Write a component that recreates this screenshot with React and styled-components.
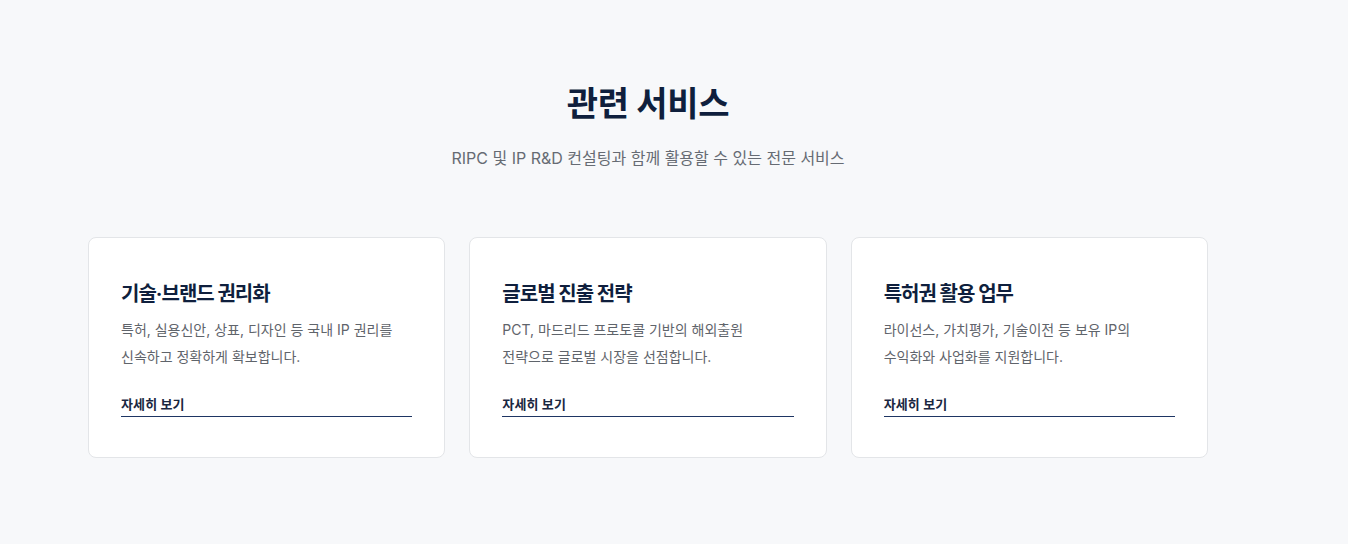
import React from "react";
import styled, { createGlobalStyle } from "styled-components";

const GlobalStyle = createGlobalStyle`
  html, body { margin: 0; padding: 0; background: #f7f8fa; }
  body { font-family: Inter, "Noto Sans CJK KR", sans-serif; -webkit-font-smoothing: antialiased; }
  * { box-sizing: border-box; }
`;

const Section = styled.section`
  background: #f7f8fa;
  min-height: 544px;
  padding: 80px 140px 80px 88px;
`;

const Header = styled.header`
  text-align: center;
  margin-bottom: 66px;
`;

const Title = styled.h2`
  margin: 0 0 18px;
  font-size: 34px;
  font-weight: 700;
  line-height: 1.4;
  letter-spacing: -0.01em;
  color: #0f1f3d;
`;

const Subtitle = styled.p`
  margin: 0;
  font-size: 16px;
  line-height: 1.6;
  color: #666b73;
`;

const Grid = styled.div`
  display: grid;
  grid-template-columns: repeat(3, 1fr);
  gap: 24px;
`;

const Card = styled.article`
  background: #ffffff;
  border: 1px solid #e3e5e8;
  border-radius: 8px;
  padding: 42px 32px 40px;
  display: flex;
  flex-direction: column;
`;

const CardTitle = styled.h3`
  margin: 0 0 8px;
  font-size: 20px;
  font-weight: 700;
  line-height: 1.4;
  letter-spacing: -0.05em;
  color: #0f1f3d;
`;

const CardText = styled.p`
  margin: 0 0 24px;
  font-size: 14px;
  line-height: 27px;
  color: #5f646b;
`;

const MoreLink = styled.a`
  display: block;
  padding-bottom: 2px;
  font-size: 13px;
  font-weight: 700;
  line-height: 20px;
  color: #1a2741;
  text-decoration: none;
  border-bottom: 1.5px solid #1e3563;
  letter-spacing: 0.01em;
`;

const services = [
  {
    title: "기술·브랜드 권리화",
    lines: ["특허, 실용신안, 상표, 디자인 등 국내 IP 권리를", "신속하고 정확하게 확보합니다."],
  },
  {
    title: "글로벌 진출 전략",
    lines: ["PCT, 마드리드 프로토콜 기반의 해외출원", "전략으로 글로벌 시장을 선점합니다."],
  },
  {
    title: "특허권 활용 업무",
    lines: ["라이선스, 가치평가, 기술이전 등 보유 IP의", "수익화와 사업화를 지원합니다."],
  },
];

export default function App() {
  return (
    <>
      <GlobalStyle />
      <Section>
        <Header>
          <Title>관련 서비스</Title>
          <Subtitle>RIPC 및 IP R&amp;D 컨설팅과 함께 활용할 수 있는 전문 서비스</Subtitle>
        </Header>
        <Grid>
          {services.map((s) => (
            <Card key={s.title}>
              <CardTitle>{s.title}</CardTitle>
              <CardText>
                {s.lines[0]}
                <br />
                {s.lines[1]}
              </CardText>
              <MoreLink href="#">자세히 보기</MoreLink>
            </Card>
          ))}
        </Grid>
      </Section>
    </>
  );
}
